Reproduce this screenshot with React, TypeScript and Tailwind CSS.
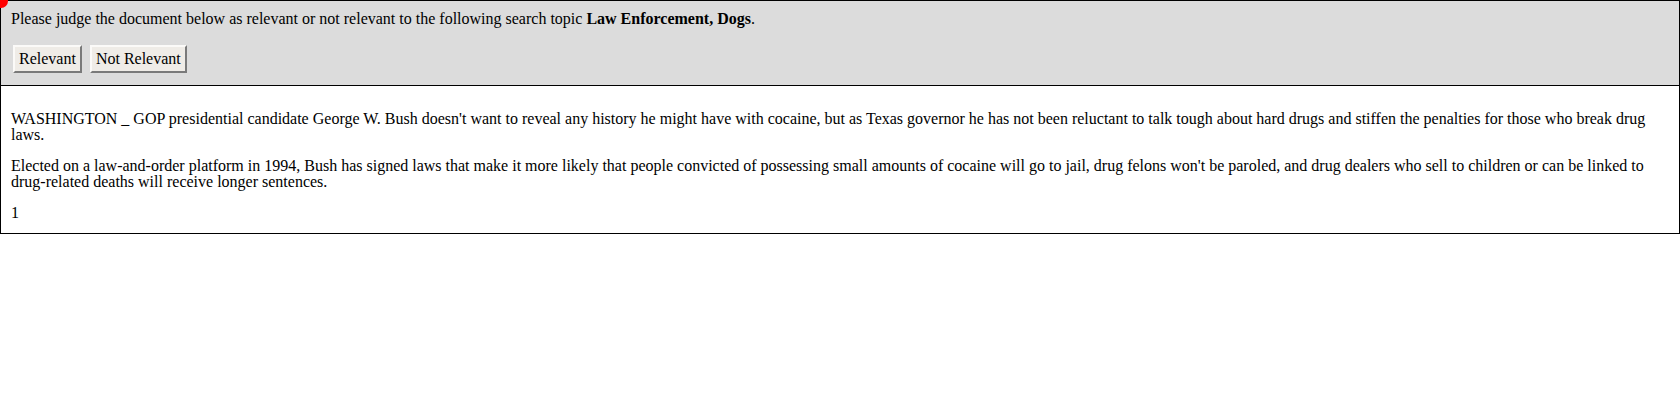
import React from 'react';

const topic = 'Law Enforcement, Dogs';

const paragraphs = [
  "WASHINGTON _ GOP presidential candidate George W. Bush doesn't want to reveal any history he might have with cocaine, but as Texas governor he has not been reluctant to talk tough about hard drugs and stiffen the penalties for those who break drug laws.",
  "Elected on a law-and-order platform in 1994, Bush has signed laws that make it more likely that people convicted of possessing small amounts of cocaine will go to jail, drug felons won't be paroled, and drug dealers who sell to children or can be linked to drug-related deaths will receive longer sentences.",
  '1',
];

const JudgeButton: React.FC<{ label: string }> = ({ label }) => (
  <button className="h-[28px] px-[4px] bg-[#efece7] border-2 border-t-[#fbfaf8] border-l-[#fbfaf8] border-b-[#7a7a7a] border-r-[#7a7a7a] text-[16px] leading-none text-black">
    {label}
  </button>
);

const App: React.FC = () => {
  return (
    <div className="relative bg-white text-black text-[16px] font-['Liberation_Serif','Times_New_Roman',serif] min-h-[400px]">
      <div className="absolute -left-[6px] -top-[6px] w-[14px] h-[14px] rounded-full bg-[#ff0000] z-10" />

      {/* judging panel */}
      <div className="bg-[#dcdcdc] border border-black px-[10px] pt-[10px] pb-[12px]">
        <p className="leading-[16px]">
          Please judge the document below as relevant or not relevant to the following search topic{' '}
          <b>{topic}</b>.
        </p>
        <div className="flex gap-[8px] mt-[18px] pl-[2px]">
          <JudgeButton label="Relevant" />
          <JudgeButton label="Not Relevant" />
        </div>
      </div>

      {/* document */}
      <div className="border border-t-0 border-black px-[10px] pt-[25px] pb-[12px] flex flex-col gap-[15px]">
        {paragraphs.map((text, i) => (
          <p key={i} className="leading-[16px]">
            {text}
          </p>
        ))}
      </div>
    </div>
  );
};

export default App;
